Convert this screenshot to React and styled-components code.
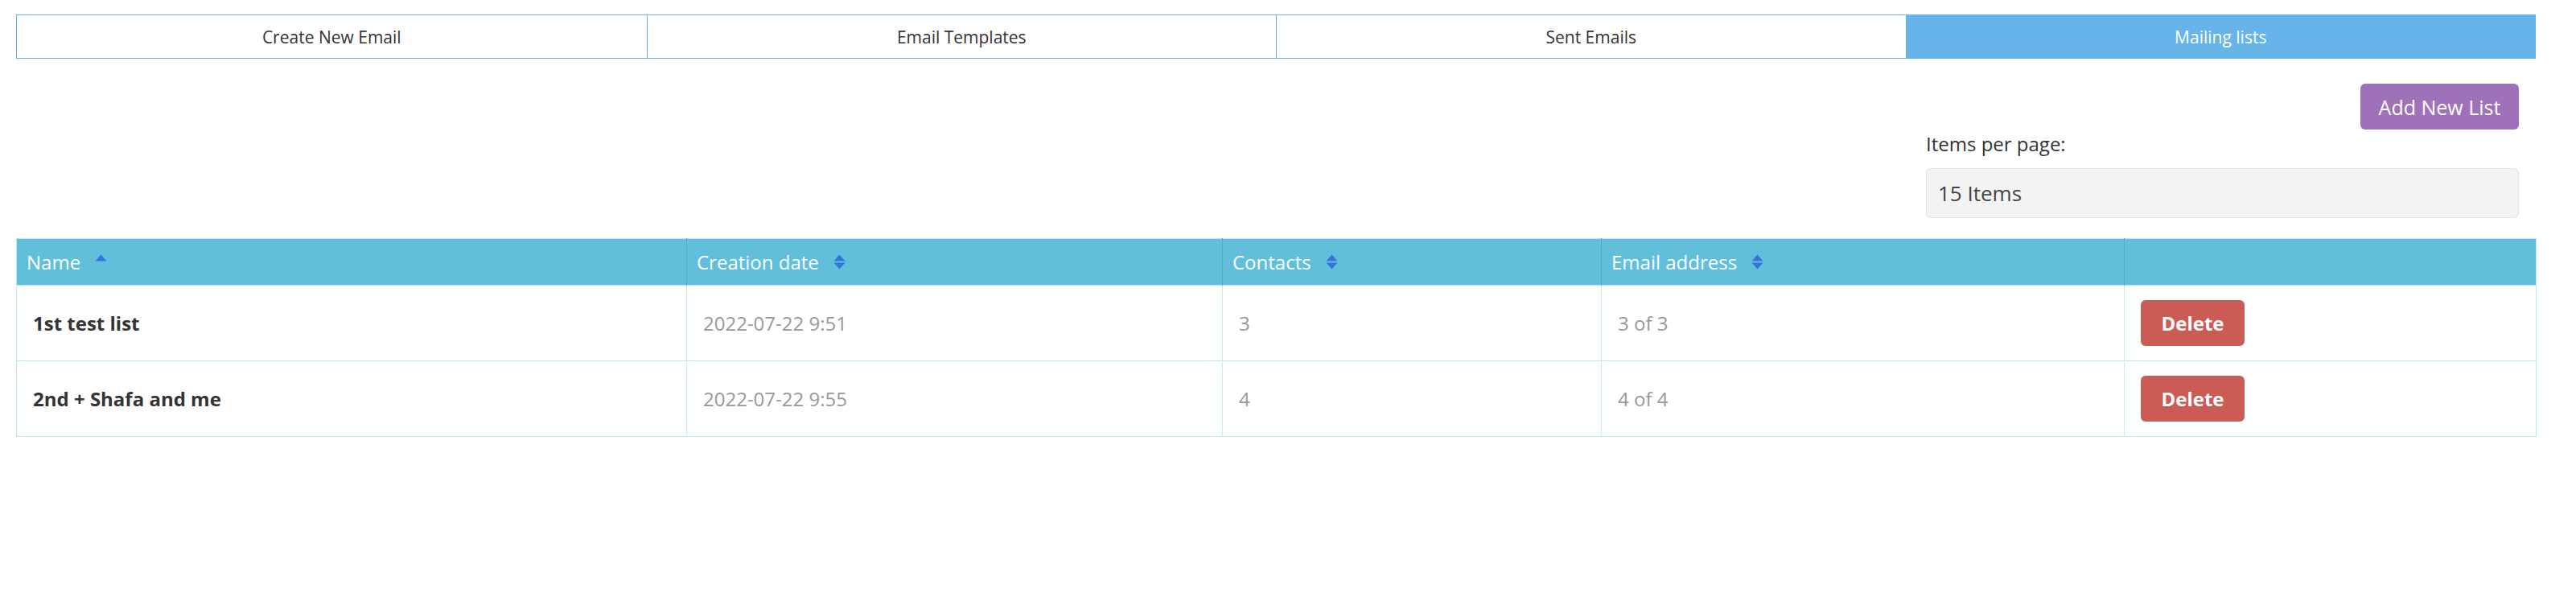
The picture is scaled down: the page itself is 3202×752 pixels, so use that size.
import React from "react";
import styled, { createGlobalStyle } from "styled-components";

const Global = createGlobalStyle`
  html, body { margin: 0; padding: 0; background: #fff; }
  body { font-family: "Open Sans", "Liberation Sans", sans-serif; color: #333; }
  * { box-sizing: border-box; }
`;

const Page = styled.div`
  padding: 18px 50px 0 20px;
`;

const Tabs = styled.nav`
  display: grid;
  grid-template-columns: repeat(4, 1fr);
  border: 1px solid #65b3e9;
  height: 55px;
`;

const Tab = styled.div`
  display: flex;
  align-items: center;
  justify-content: center;
  font-size: 21px;
  color: ${(p) => (p.$active ? "#fff" : "#333")};
  background: ${(p) => (p.$active ? "#67b4ea" : "#fff")};
  border-left: ${(p) => (p.$first ? "none" : "1px solid #65b3e9")};
`;

const Toolbar = styled.div`
  display: flex;
  flex-direction: column;
  align-items: flex-end;
  padding: 31px 21px 0 0;
`;

const AddButton = styled.button`
  height: 57px;
  width: 197px;
  border: none;
  border-radius: 6px;
  background: #a071bb;
  color: #fff;
  font-family: inherit;
  font-size: 25px;
  cursor: pointer;
`;

const PerPage = styled.div`
  width: 737px;
  display: flex;
  flex-direction: column;
`;

const Label = styled.label`
  font-size: 24px;
  line-height: 34px;
  margin: 1px 0 13px;
  color: #333;
`;

const Select = styled.div`
  height: 62px;
  display: flex;
  align-items: center;
  padding-left: 14px;
  background: #f3f3f3;
  border: 1px solid #e3e3e3;
  border-radius: 6px;
  font-size: 26px;
  color: #444;
`;

const Table = styled.table`
  margin-top: 25px;
  width: 100%;
  border-collapse: collapse;
  table-layout: fixed;
  border: 1px solid #bfe7f0;
`;

const Th = styled.th`
  background: #62bfdb;
  color: #fff;
  font-weight: 400;
  font-size: 24px;
  text-align: left;
  height: 58px;
  padding: 0 12px;
  border-left: 1px solid #52afcc;
  &:first-child { border-left: none; }
`;

const HeadInner = styled.span`
  display: inline-flex;
  align-items: center;
  gap: 18px;
`;

const Td = styled.td`
  height: 94px;
  padding: 0 20px;
  font-size: 24px;
  font-weight: ${(p) => (p.$bold ? 700 : 400)};
  color: ${(p) => (p.$bold ? "#333" : "#999")};
  border-left: 1px solid #c9ecf3;
  border-top: 1px solid #bfe7f0;
  &:first-child { border-left: none; }
`;

const DeleteButton = styled.button`
  height: 57px;
  width: 129px;
  border: none;
  border-radius: 6px;
  background: #cb5c55;
  color: #fff;
  font-family: inherit;
  font-weight: 700;
  font-size: 24px;
  cursor: pointer;
`;

const SortIcon = ({ upOnly }) => (
  <svg width="15" height="19" viewBox="0 0 15 19">
    <path d="M7.5 0.5 L14.5 8.5 L0.5 8.5 Z" fill="#3375d9" />
    {!upOnly && <path d="M7.5 18.5 L14.5 10.5 L0.5 10.5 Z" fill="#3375d9" />}
  </svg>
);

const cols = [
  { label: "Name", width: 833, upOnly: true },
  { label: "Creation date", width: 666 },
  { label: "Contacts", width: 471 },
  { label: "Email address", width: 650 },
  { label: "", width: 512, noSort: true },
];

const rows = [
  { name: "1st test list", date: "2022-07-22 9:51", contacts: "3", email: "3 of 3" },
  { name: "2nd + Shafa and me", date: "2022-07-22 9:55", contacts: "4", email: "4 of 4" },
];

export default function App() {
  return (
    <>
      <Global />
      <Page>
        <Tabs>
          <Tab $first>Create New Email</Tab>
          <Tab>Email Templates</Tab>
          <Tab>Sent Emails</Tab>
          <Tab $active>Mailing lists</Tab>
        </Tabs>
        <Toolbar>
          <AddButton>Add New List</AddButton>
          <PerPage>
            <Label>Items per page:</Label>
            <Select>15 Items</Select>
          </PerPage>
        </Toolbar>
        <Table>
          <colgroup>
            {cols.map((c, i) => (
              <col key={i} style={{ width: c.width }} />
            ))}
          </colgroup>
          <thead>
            <tr>
              {cols.map((c, i) => (
                <Th key={i}>
                  {!c.noSort && (
                    <HeadInner>
                      {c.label}
                      <SortIcon upOnly={c.upOnly} />
                    </HeadInner>
                  )}
                </Th>
              ))}
            </tr>
          </thead>
          <tbody>
            {rows.map((r, i) => (
              <tr key={i}>
                <Td $bold>{r.name}</Td>
                <Td>{r.date}</Td>
                <Td>{r.contacts}</Td>
                <Td>{r.email}</Td>
                <Td>
                  <DeleteButton>Delete</DeleteButton>
                </Td>
              </tr>
            ))}
          </tbody>
        </Table>
      </Page>
    </>
  );
}
